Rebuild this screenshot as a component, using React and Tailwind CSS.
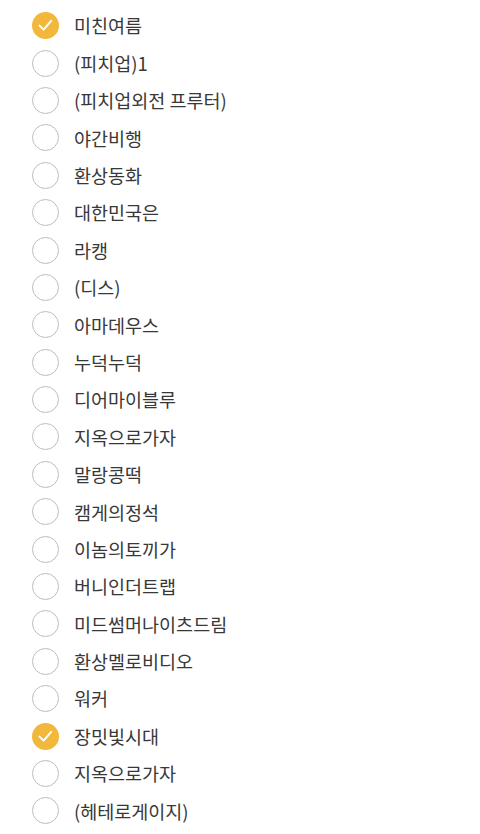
import { useState } from "react";

const songs = [
  { title: "미친여름", checked: true },
  { title: "(피치업)1" },
  { title: "(피치업외전 프루터)" },
  { title: "야간비행" },
  { title: "환상동화" },
  { title: "대한민국은" },
  { title: "라캥" },
  { title: "(디스)" },
  { title: "아마데우스" },
  { title: "누덕누덕" },
  { title: "디어마이블루" },
  { title: "지옥으로가자" },
  { title: "말랑콩떡" },
  { title: "캠게의정석" },
  { title: "이놈의토끼가" },
  { title: "버니인더트랩" },
  { title: "미드썸머나이츠드림" },
  { title: "환상멜로비디오" },
  { title: "워커" },
  { title: "장밋빛시대", checked: true },
  { title: "지옥으로가자" },
  { title: "(헤테로게이지)" },
];

function CheckCircle({ checked }) {
  if (checked) {
    return (
      <span className="flex-shrink-0 w-[27px] h-[27px] rounded-full bg-[#f1b83c] flex items-center justify-center">
        <svg width="17" height="17" viewBox="0 0 17 17" fill="none">
          <path d="M2.5 8.6 L6.6 12.6 L14.2 3.8" stroke="white" strokeWidth="2" strokeLinecap="round" strokeLinejoin="round" />
        </svg>
      </span>
    );
  }
  return <span className="flex-shrink-0 w-[27px] h-[27px] rounded-full border-[1.5px] border-[#bdbdbd] bg-white" />;
}

export default function App() {
  const [items, setItems] = useState(songs);

  const toggle = (i) => {
    setItems((prev) => prev.map((s, j) => (j === i ? { ...s, checked: !s.checked } : s)));
  };

  return (
    <div className="w-[480px] h-[834px] bg-white overflow-hidden pt-[7px]" style={{ fontFamily: '"Noto Sans CJK KR", "Noto Sans", sans-serif' }}>
      <ul className="flex flex-col">
        {items.map((s, i) => (
          <li key={i} onClick={() => toggle(i)} className="h-[37.4px] flex items-center pl-[32px] cursor-pointer">
            <CheckCircle checked={s.checked} />
            <span className="ml-[15px] text-[18.5px] leading-none text-[#383838]">{s.title}</span>
          </li>
        ))}
      </ul>
    </div>
  );
}
